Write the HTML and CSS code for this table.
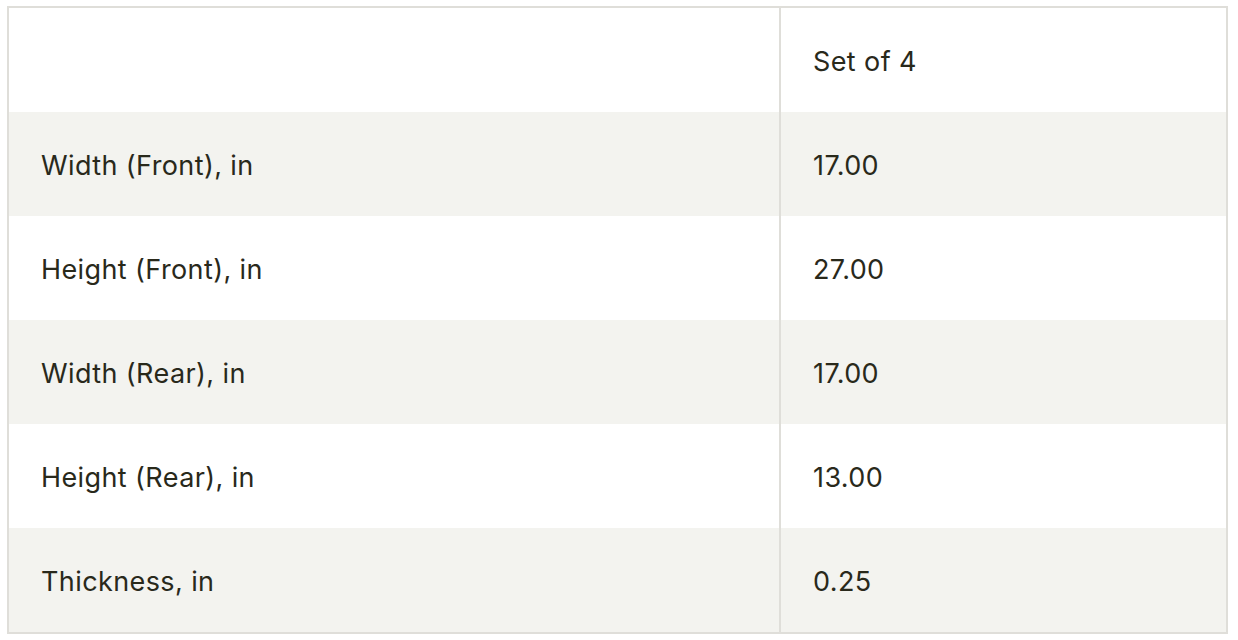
FILE: index.html
```html
<!DOCTYPE html>
<html lang="en">
<head>
<meta charset="utf-8">
<title>Specs</title>
<link rel="stylesheet" href="styles.css">
</head>
<body>
<table class="specs">
  <thead>
    <tr class="row row-head">
      <th class="cell label"></th>
      <th class="cell value">Set of 4</th>
    </tr>
  </thead>
  <tbody>
    <tr class="row row-alt">
      <td class="cell label">Width (Front), in</td>
      <td class="cell value">17.00</td>
    </tr>
    <tr class="row">
      <td class="cell label">Height (Front), in</td>
      <td class="cell value">27.00</td>
    </tr>
    <tr class="row row-alt">
      <td class="cell label">Width (Rear), in</td>
      <td class="cell value">17.00</td>
    </tr>
    <tr class="row">
      <td class="cell label">Height (Rear), in</td>
      <td class="cell value">13.00</td>
    </tr>
    <tr class="row row-alt">
      <td class="cell label">Thickness, in</td>
      <td class="cell value">0.25</td>
    </tr>
  </tbody>
</table>
</body>
</html>
```
FILE: styles.css
```css
html, body {
  margin: 0;
  padding: 0;
  background: #ffffff;
}
body {
  padding: 6px 10px 0 7px;
  font-family: "Inter", "Liberation Sans", sans-serif;
  color: #29291b;
}
.specs {
  width: 1221px;
  border-collapse: separate;
  border-spacing: 0;
  border: 2px solid #dfded9;
}
.row {
  height: 104px;
  background: #ffffff;
}
.row-alt {
  background: #f3f3ef;
}
.cell {
  padding: 2px 32px 0 32px;
  font-size: 27px;
  font-weight: 400;
  text-align: left;
  vertical-align: middle;
  line-height: 1;
  letter-spacing: 0.4px;
}
.label {
  width: 706px;
  border-right: 2px solid #dfded9;
}
```
